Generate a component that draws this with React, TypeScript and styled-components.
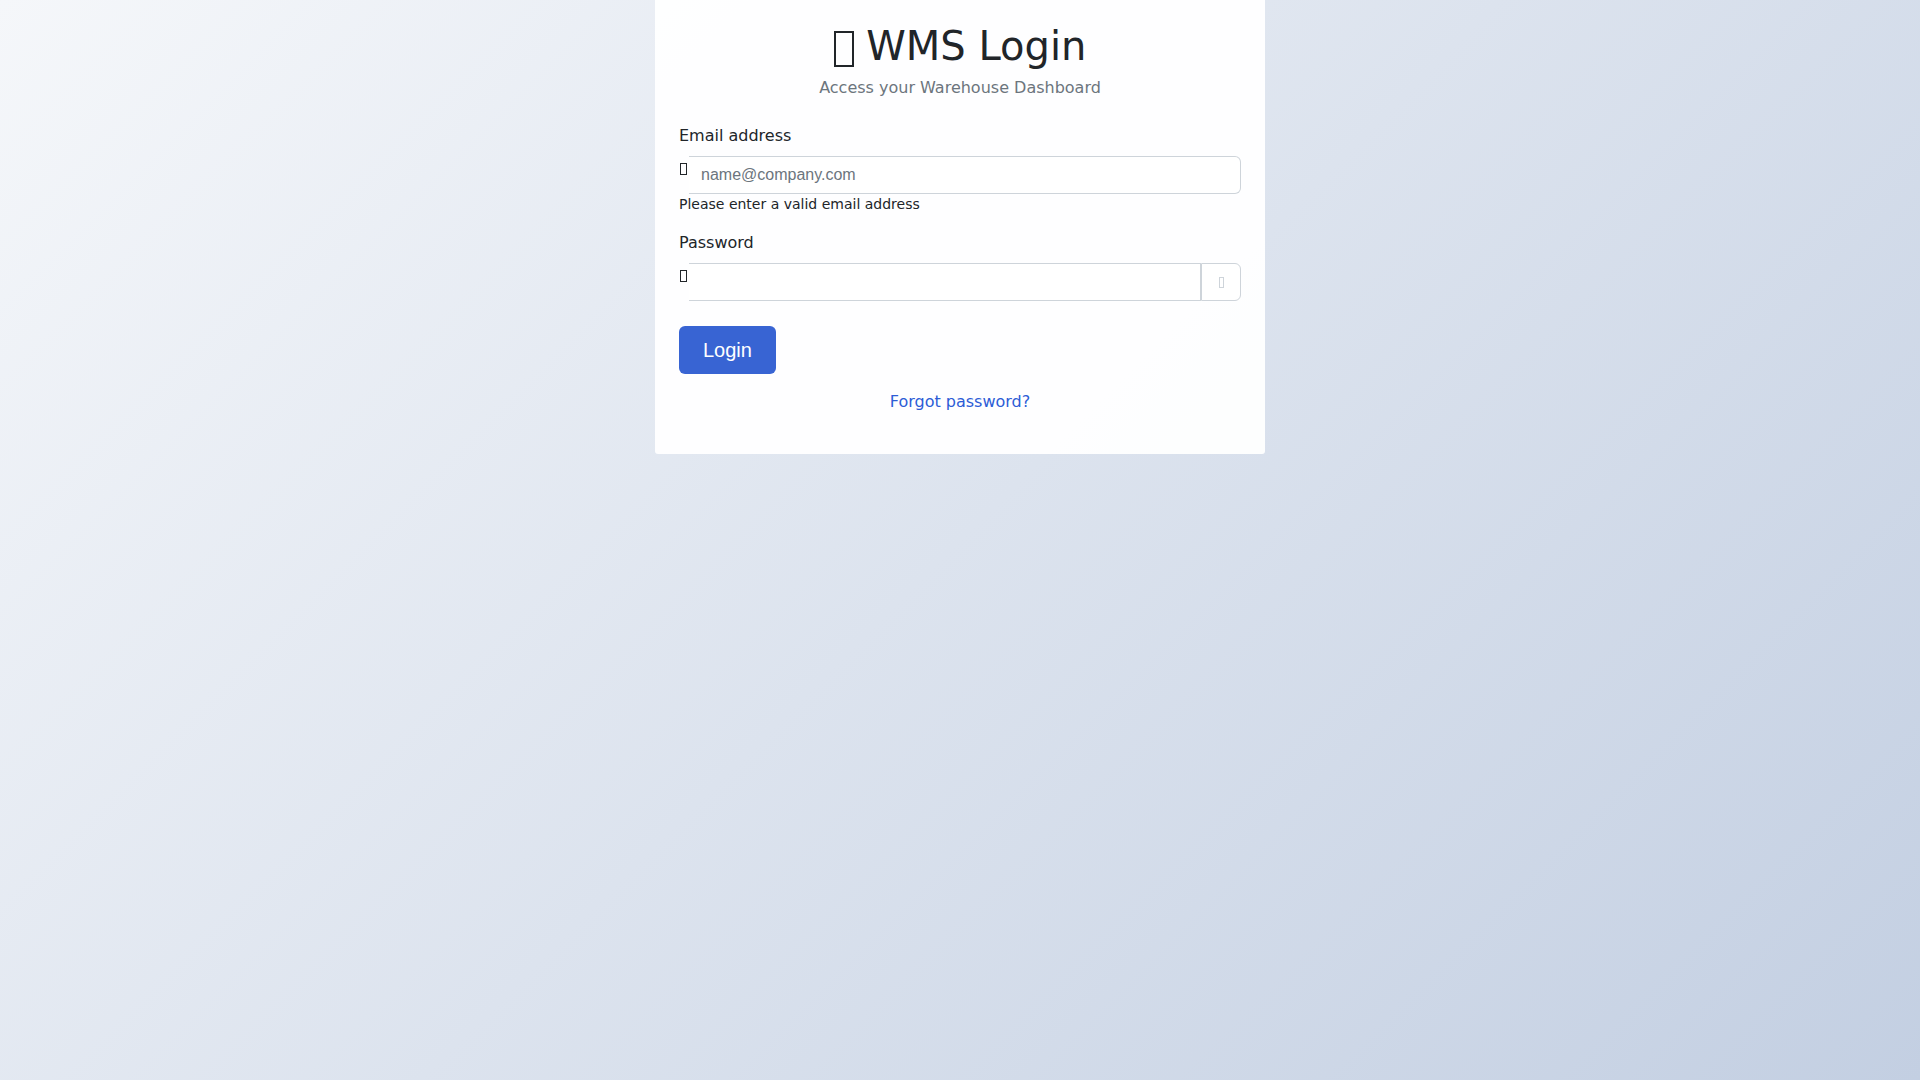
import React from "react";
import styled, { createGlobalStyle } from "styled-components";

const GlobalStyle = createGlobalStyle`
  * { box-sizing: border-box; }
  html, body { margin: 0; padding: 0; }
  body {
    min-height: 100vh;
    font-family: "DejaVu Sans", sans-serif;
    color: #212529;
    background: linear-gradient(135deg, #f5f7fa 0%, #c3cfe2 100%);
    background-attachment: fixed;
  }
`;

const Page = styled.main`
  min-height: 100vh;
  display: flex;
  flex-direction: column;
  align-items: center;
`;

const Card = styled.section`
  width: 610px;
  padding: 22px 24px 40px;
  background: rgba(255, 255, 255, 0.95);
  border-radius: 0 0 3px 3px;
`;

const Header = styled.header`
  text-align: center;
  margin-bottom: 24px;
`;

const Title = styled.h1`
  margin: 0 0 6px;
  font-size: 40px;
  line-height: 48px;
  font-weight: 400;
  color: #212529;
`;

const Glyph = styled.span<{ $w: number; $h: number; $stroke: number; $color?: string; $drop?: number }>`
  display: inline-block;
  width: ${(p) => p.$w}px;
  height: ${(p) => p.$h}px;
  border: ${(p) => p.$stroke}px solid ${(p) => p.$color ?? "#212529"};
  vertical-align: ${(p) => -(p.$drop ?? 0)}px;
`;

const Subtitle = styled.p`
  margin: 0;
  font-size: 16px;
  line-height: 24px;
  color: #6c757d;
`;

const Field = styled.div`
  margin-bottom: 16px;
`;

const Label = styled.label`
  display: block;
  margin-bottom: 8px;
  font-size: 16px;
  line-height: 24px;
  color: #212529;
`;

const InputRow = styled.div`
  display: flex;
  align-items: flex-start;
`;

const IconSlot = styled.span`
  width: 10px;
  flex: none;
  padding: 7px 0 0 1px;
  display: flex;
`;

const Input = styled.input<{ $joined?: boolean }>`
  flex: 1;
  min-width: 0;
  height: 38px;
  padding: 0 12px;
  font-family: "Liberation Sans", Arial, sans-serif;
  font-size: 16px;
  color: #212529;
  background: #fff;
  border: 1px solid #ced4da;
  border-left: none;
  border-radius: ${(p) => (p.$joined ? "0" : "0 6px 6px 0")};
  outline: none;
  &::placeholder {
    color: #6c757d;
  }
`;

const ToggleButton = styled.button`
  width: 40px;
  height: 38px;
  flex: none;
  display: flex;
  align-items: center;
  justify-content: center;
  background: #fff;
  border: 1px solid #ced4da;
  border-radius: 0 6px 6px 0;
  padding: 0;
  cursor: pointer;
`;

const Help = styled.div`
  font-size: 14px;
  line-height: 21px;
  color: #212529;
`;

const LoginButton = styled.button`
  margin-top: 9px;
  height: 48px;
  padding: 0 24px;
  font-family: "Liberation Sans", Arial, sans-serif;
  font-size: 20px;
  color: #fff;
  background: #3864d3;
  border: none;
  border-radius: 6px;
  cursor: pointer;
`;

const LinkRow = styled.div`
  margin-top: 16px;
  text-align: center;
  font-size: 16px;
  line-height: 24px;
`;

const Link = styled.a`
  color: #2c5cd6;
  text-decoration: none;
`;

export default function App() {
  return (
    <>
      <GlobalStyle />
      <Page>
        <Card>
          <Header>
            <Title>
              <Glyph $w={20} $h={36} $stroke={2} $drop={7} /> WMS Login
            </Title>
            <Subtitle>Access your Warehouse Dashboard</Subtitle>
          </Header>
          <form onSubmit={(e) => e.preventDefault()}>
            <Field>
              <Label htmlFor="email">Email address</Label>
              <InputRow>
                <IconSlot>
                  <Glyph $w={7} $h={12} $stroke={1} />
                </IconSlot>
                <Input id="email" type="email" placeholder="name@company.com" />
              </InputRow>
              <Help>Please enter a valid email address</Help>
            </Field>
            <Field>
              <Label htmlFor="password">Password</Label>
              <InputRow>
                <IconSlot>
                  <Glyph $w={7} $h={12} $stroke={1} />
                </IconSlot>
                <Input id="password" type="password" $joined />
                <ToggleButton type="button" aria-label="Show password">
                  <Glyph $w={5} $h={11} $stroke={1} $color="#ced4da" />
                </ToggleButton>
              </InputRow>
            </Field>
            <LoginButton type="submit">Login</LoginButton>
            <LinkRow>
              <Link href="#">Forgot password?</Link>
            </LinkRow>
          </form>
        </Card>
      </Page>
    </>
  );
}
